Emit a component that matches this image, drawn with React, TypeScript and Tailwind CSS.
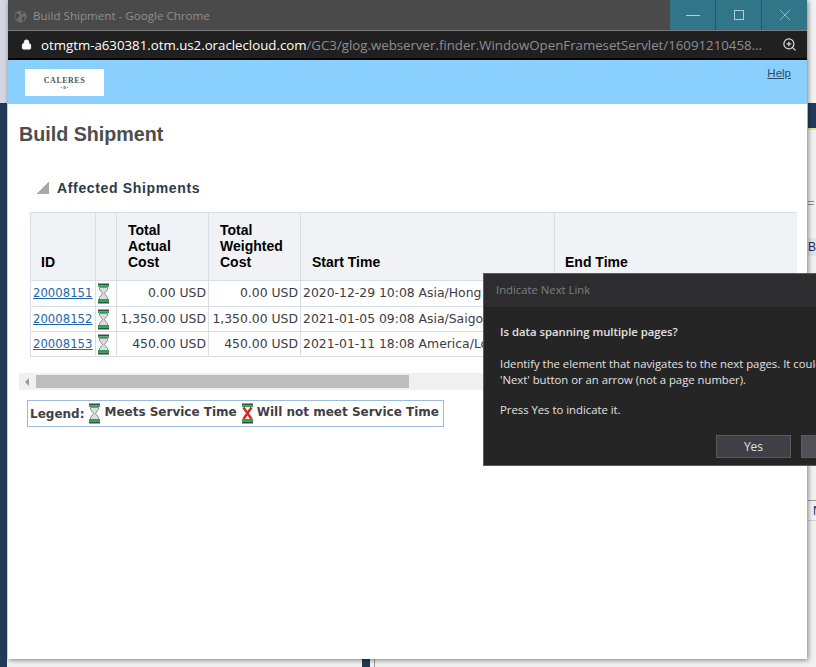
import { Lock, X, ZoomIn } from 'lucide-react';

const shipments = [
  { id: '20008151', actual: '0.00 USD', weighted: '0.00 USD', start: '2020-12-29 10:08 Asia/Hong Kong', h: 'h-[26px]' },
  { id: '20008152', actual: '1,350.00 USD', weighted: '1,350.00 USD', start: '2021-01-05 09:08 Asia/Saigon', h: 'h-[25px]' },
  { id: '20008153', actual: '450.00 USD', weighted: '450.00 USD', start: '2021-01-11 18:08 America/Los_Angeles', h: 'h-[25px]' },
];

function Hourglass({ late = false }: { late?: boolean }) {
  return (
    <svg width="13" height="21" viewBox="0 0 13 21" className="block shrink-0">
      <rect x="1" y="0.5" width="11" height="2" fill="#3c4a40" />
      <rect x="1" y="2.5" width="11" height="1.500" fill="#22a550" />
      {late ? (
        <path d="M2.500 4.500L10.500 16M10.500 4.500L2.500 16" stroke="#d42b2b" strokeWidth="2.500" fill="none" />
      ) : (
        <path d="M2.500 4.500h8v2L7.400 10.500l3.100 4v2h-8v-2l3.100-4-3.100-4z" fill="#dcdcdc" stroke="#8d8d8d" strokeWidth="1" />
      )}
      <rect x="1" y="16" width="11" height="2.500" fill="#22a550" />
      <rect x="1" y="18.500" width="11" height="2" fill="#3c4a40" />
    </svg>
  );
}

function TitleBar() {
  return (
    <div className="flex h-[31px] items-stretch border-b border-[#7a7a7a] bg-[#4a4a4a]">
      <div className="flex flex-1 items-center pl-[6px] pt-[2px]">
        <svg width="13" height="13" viewBox="0 0 13 13" className="mr-[6px]">
          <circle cx="6.500" cy="6.500" r="6" fill="#6e6e6e" />
          <path d="M2 3.500l3 .5 1 2-2 1.500-1.500 2.500L1 7zM7 1l3 1-1 2.500-2-.5zM8 7l3-.5-1 4-2 1z" fill="#4a4a4a" />
        </svg>
        <span className="font-['Open_Sans',sans-serif] text-[11.6px] text-[#8e8e8e]">Build Shipment - Google Chrome</span>
      </div>
      <div className="flex h-[30px] w-[45px] items-center justify-center bg-[#317589]"><div className="h-px w-[14px] bg-[#b5ced6]" /></div>
      <div className="ml-px flex h-[30px] w-[45px] items-center justify-center bg-[#317589]"><div className="h-[10px] w-[10px] border border-[#b5ced6]" /></div>
      <div className="ml-px flex h-[30px] w-[45px] items-center justify-center bg-[#317589] text-[#b5ced6]"><X size={20} strokeWidth={0.9} /></div>
    </div>
  );
}

function AddressBar() {
  return (
    <div className="flex h-[29px] items-center border-b-[2px] border-black bg-[#202020] pl-[13px] pr-[10px]">
      <Lock size={11} className="fill-white text-white" />
      <div className="ml-[9px] flex-1 truncate font-['Open_Sans',sans-serif] text-[13.25px] leading-[16px] text-[#8f8f8f]">
        <span className="text-white">otmgtm-a630381.otm.us2.oraclecloud.com</span>/GC3/glog.webserver.finder.WindowOpenFramesetServlet/16091210458...
      </div>
      <ZoomIn size={15} className="ml-[16px] text-[#d8d8d8]" />
    </div>
  );
}

function ShipmentTable() {
  return (
    <div className="ml-[11px] mt-[16px] w-[778px] overflow-hidden pl-[11px]">
      <table className="w-[900px] table-fixed border-collapse font-['DejaVu_Sans',sans-serif] text-[12.4px] text-[#3c3c44]">
        <colgroup>
          <col className="w-[65px]" />
          <col className="w-[21px]" />
          <col className="w-[92px]" />
          <col className="w-[92px]" />
          <col className="w-[254px]" />
          <col className="w-[376px]" />
        </colgroup>
        <thead className="font-['Liberation_Sans',sans-serif] text-[14px] leading-[16px] font-bold text-black">
          <tr className="h-[68px] bg-[#f0f2f6] [&>th]:border [&>th]:border-[#d6dee8] [&>th]:pb-[10px] [&>th]:text-left [&>th]:align-bottom">
            <th className="pl-[10px]">ID</th>
            <th></th>
            <th className="pl-[11px]">Total<br />Actual<br />Cost</th>
            <th className="pl-[11px]">Total<br />Weighted<br />Cost</th>
            <th className="pl-[11px]">Start Time</th>
            <th className="pl-[10px]">End Time</th>
          </tr>
        </thead>
        <tbody>
          {shipments.map((s) => (
            <tr key={s.id} className={`${s.h} [&>td]:border [&>td]:border-[#d6dee8]`}>
              <td className="pl-[2px]"><a className="text-[11.7px] text-[#1f66a8] underline">{s.id}</a></td>
              <td className="pl-px"><Hourglass /></td>
              <td className="whitespace-nowrap pr-[2px] text-right">{s.actual}</td>
              <td className="whitespace-nowrap pr-[2px] text-right">{s.weighted}</td>
              <td className="whitespace-nowrap pl-[2px]">{s.start}</td>
              <td></td>
            </tr>
          ))}
        </tbody>
      </table>
    </div>
  );
}

function IndicateDialog() {
  return (
    <div className="absolute left-[483px] top-[273px] h-[193px] w-[333px] overflow-hidden border-y border-l border-[#1c6ea4] bg-[#252526] font-['Open_Sans',sans-serif] text-[11.3px] text-[#e2e2e2]">
      <div className="flex h-[33px] items-center bg-[#2d2d30] pl-[12px] text-[#7f7f7f]">Indicate Next Link</div>
      <div className="w-[400px] pl-[16px] pt-[17px] leading-[16px]">
        <p className="font-semibold">Is data spanning multiple pages?</p>
        <p className="mt-[16px]">Identify the element that navigates to the next pages. It could be a<br />'Next' button or an arrow (not a page number).</p>
        <p className="mt-[14px]">Press Yes to indicate it.</p>
      </div>
      <div className="absolute left-[232px] top-[161px] flex gap-[10px]">
        <button className="h-[23px] w-[75px] shrink-0 border border-[#5a5a5e] bg-[#3f3f46] text-[12px] text-[#e2e2e2]">Yes</button>
        <button className="h-[23px] w-[75px] shrink-0 border border-[#5a5a5e] bg-[#505056] text-[12px]">No</button>
      </div>
    </div>
  );
}

export default function App() {
  return (
    <div className="relative h-[667px] w-[816px] overflow-hidden bg-[#f2f2f2] font-['Liberation_Sans',sans-serif]">
      {/* app behind the popup */}
      <div className="absolute left-0 top-0 h-[103px] w-[8px] bg-[#d5d8e4]" />
      <div className="absolute left-0 top-[103px] h-[564px] w-[7px] bg-[#243a5a]" />
      <div className="absolute left-[362px] top-[659px] h-[8px] w-[8px] bg-[#243a5a]" />
      <div className="absolute left-[374px] top-[659px] h-[8px] w-px bg-[#9a9a9a]" />
      <div className="absolute left-[808px] top-[103px] h-[25px] w-[8px] bg-[#243a5a]" />
      <div className="absolute left-[808px] top-[128px] h-[2px] w-[8px] bg-[#ecdf8e]" />
      <div className="absolute left-[808px] top-[201px] h-[4px] w-[6px] border-y border-[#8a8a8a]" />
      <div className="absolute left-[808px] top-[238px] h-[18px] w-[8px] overflow-hidden bg-[#e2e4ea] text-[12px] leading-[18px] text-[#222a66]">BI</div>
      <div className="absolute left-[808px] top-[500px] h-px w-[8px] bg-[#9a9a9a]" />
      <div className="absolute left-[808px] top-[504px] h-[16px] w-[8px] overflow-hidden pl-[5px] text-[12px] leading-[14px] text-[#222a66]">N</div>
      <div className="absolute left-[808px] top-[520px] h-px w-[8px] bg-[#d0d0d0]" />

      {/* chrome popup */}
      <div className="absolute left-[8px] top-0 h-[659px] w-[799px] overflow-hidden bg-white shadow-[1px_1px_5px_rgba(0,0,0,0.5)]">
        <TitleBar />
        <AddressBar />
        <div className="flex h-[44px] items-start justify-between bg-[#8ad0ff] pl-[17px] pr-[16px] pt-[9px]">
          <div className="flex h-[27px] w-[79px] flex-col items-center justify-center bg-white pt-[2px] font-['Liberation_Serif',serif] font-bold text-[#555]">
            <span className="text-[8px] leading-[8px] tracking-[0.5px]">CALERES</span>
            <span className="text-[4px] leading-[5px]">• B •</span>
          </div>
          <a className="-mt-px text-[11.5px] leading-[11px] text-[#2f4a66] underline">Help</a>
        </div>

        <h1 className="ml-[11px] mt-[18px] text-[19.7px] leading-[24px] font-bold text-[#4d4d4d]">Build Shipment</h1>
        <div className="ml-[29px] mt-[34px] flex items-center">
          <div className="h-[12px] w-[12px] bg-[linear-gradient(135deg,transparent_50%,#a8a8a8_50%)]" />
          <h2 className="ml-[8px] text-[14px] leading-[16px] font-bold tracking-[0.65px] text-[#2e3a46]">Affected Shipments</h2>
        </div>

        <ShipmentTable />

        <div className="ml-[11px] mt-[16px] flex h-[17px] w-[778px] items-center bg-[#f0f0f0]">
          <div className="ml-[6px] h-0 w-0 border-y-[4px] border-r-[4px] border-y-transparent border-r-[#9a9a9a]" />
          <div className="ml-[7px] h-[13px] w-[373px] bg-[#bdbdbd]" />
        </div>

        <div className="ml-[19px] mt-[10px] flex h-[27px] w-[417px] items-center whitespace-nowrap border border-[#9dbcdc] pl-[2px] font-['DejaVu_Sans',sans-serif] text-[12px] font-bold text-[#3f3f46]">
          <span className="mt-[1px]">Legend:</span>
          <span className="ml-[4px]"><Hourglass /></span>
          <span className="ml-[3px] -mt-[3px]">Meets Service Time</span>
          <span className="ml-[4px]"><Hourglass late /></span>
          <span className="ml-[3px] -mt-[3px]">Will not meet Service Time</span>
        </div>
      </div>

      <IndicateDialog />
    </div>
  );
}
